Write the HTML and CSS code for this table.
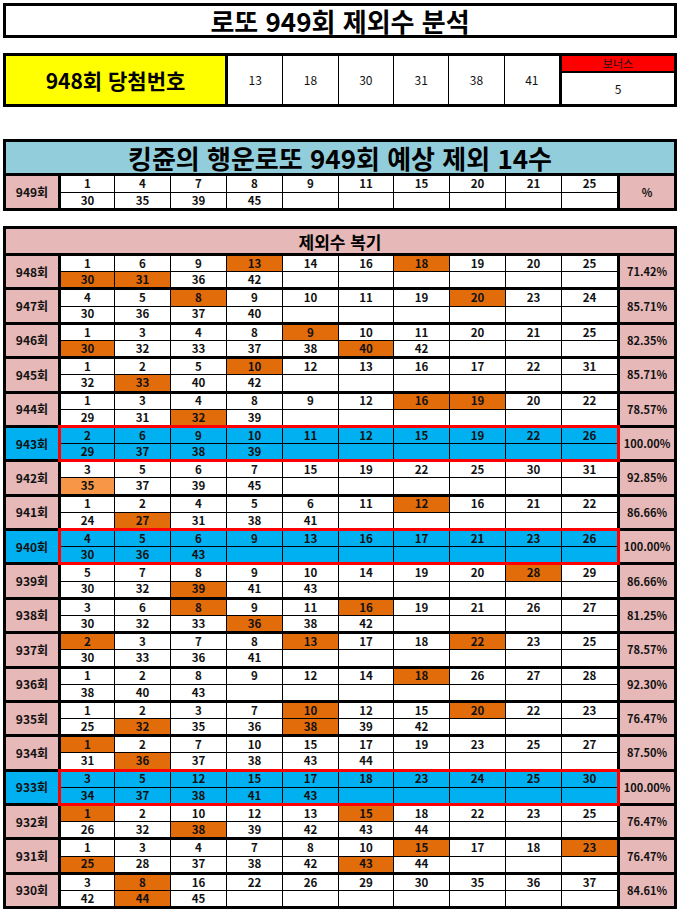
FILE: index.html
```html
<!DOCTYPE html>
<html lang="ko">
<head>
<meta charset="utf-8">
<title>로또 949회 제외수 분석</title>
<link rel="stylesheet" href="styles.css">
</head>
<body>
<div class="page">
  <div class="box title-box">로또 949회 제외수 분석</div>

  <div class="box win-box">
    <div class="win-label">948회 당첨번호</div>
    <div class="win-nums"><span>13</span><span>18</span><span>30</span><span>31</span><span>38</span><span>41</span></div>
    <div class="bonus"><div class="bonus-head">보너스</div><div class="bonus-val">5</div></div>
  </div>

  <div class="box pred-box">
    <div class="pred-title">킹쥰의 행운로또 949회 예상 제외 14수</div>
    <div class="group">
      <div class="label">949회</div>
      <div class="nums tall">
        <span>1</span><span>4</span><span>7</span><span>8</span><span>9</span><span>11</span><span>15</span><span>20</span><span>21</span><span>25</span>
        <span>30</span><span>35</span><span>39</span><span>45</span><span></span><span></span><span></span><span></span><span></span><span></span>
      </div>
      <div class="pct">%</div>
    </div>
  </div>

  <div class="box review-box">
    <div class="review-title">제외수 복기</div>

    <div class="group">
      <div class="label">948회</div>
      <div class="nums">
        <span>1</span><span>6</span><span>9</span><span class="o">13</span><span>14</span><span>16</span><span class="o">18</span><span>19</span><span>20</span><span>25</span>
        <span class="o">30</span><span class="o">31</span><span>36</span><span>42</span><span></span><span></span><span></span><span></span><span></span><span></span>
      </div>
      <div class="pct">71.42%</div>
    </div>

    <div class="group">
      <div class="label">947회</div>
      <div class="nums">
        <span>4</span><span>5</span><span class="o">8</span><span>9</span><span>10</span><span>11</span><span>19</span><span class="o">20</span><span>23</span><span>24</span>
        <span>30</span><span>36</span><span>37</span><span>40</span><span></span><span></span><span></span><span></span><span></span><span></span>
      </div>
      <div class="pct">85.71%</div>
    </div>

    <div class="group">
      <div class="label">946회</div>
      <div class="nums">
        <span>1</span><span>3</span><span>4</span><span>8</span><span class="o">9</span><span>10</span><span>11</span><span>20</span><span>21</span><span>25</span>
        <span class="o">30</span><span>32</span><span>33</span><span>37</span><span>38</span><span class="o">40</span><span>42</span><span></span><span></span><span></span>
      </div>
      <div class="pct">82.35%</div>
    </div>

    <div class="group">
      <div class="label">945회</div>
      <div class="nums">
        <span>1</span><span>2</span><span>5</span><span class="o">10</span><span>12</span><span>13</span><span>16</span><span>17</span><span>22</span><span>31</span>
        <span>32</span><span class="o">33</span><span>40</span><span>42</span><span></span><span></span><span></span><span></span><span></span><span></span>
      </div>
      <div class="pct">85.71%</div>
    </div>

    <div class="group">
      <div class="label">944회</div>
      <div class="nums">
        <span>1</span><span>3</span><span>4</span><span>8</span><span>9</span><span>12</span><span class="o">16</span><span class="o">19</span><span>20</span><span>22</span>
        <span>29</span><span>31</span><span class="o">32</span><span>39</span><span></span><span></span><span></span><span></span><span></span><span></span>
      </div>
      <div class="pct">78.57%</div>
    </div>

    <div class="group hit">
      <div class="label">943회</div>
      <div class="nums">
        <span>2</span><span>6</span><span>9</span><span>10</span><span>11</span><span>12</span><span>15</span><span>19</span><span>22</span><span>26</span>
        <span>29</span><span>37</span><span>38</span><span>39</span><span></span><span></span><span></span><span></span><span></span><span></span>
      </div>
      <div class="pct">100.00%</div>
    </div>

    <div class="group">
      <div class="label">942회</div>
      <div class="nums">
        <span>3</span><span>5</span><span>6</span><span>7</span><span>15</span><span>19</span><span>22</span><span>25</span><span>30</span><span>31</span>
        <span class="l">35</span><span>37</span><span>39</span><span>45</span><span></span><span></span><span></span><span></span><span></span><span></span>
      </div>
      <div class="pct">92.85%</div>
    </div>

    <div class="group">
      <div class="label">941회</div>
      <div class="nums">
        <span>1</span><span>2</span><span>4</span><span>5</span><span>6</span><span>11</span><span class="o">12</span><span>16</span><span>21</span><span>22</span>
        <span>24</span><span class="o">27</span><span>31</span><span>38</span><span>41</span><span></span><span></span><span></span><span></span><span></span>
      </div>
      <div class="pct">86.66%</div>
    </div>

    <div class="group hit">
      <div class="label">940회</div>
      <div class="nums">
        <span>4</span><span>5</span><span>6</span><span>9</span><span>13</span><span>16</span><span>17</span><span>21</span><span>23</span><span>26</span>
        <span>30</span><span>36</span><span>43</span><span></span><span></span><span></span><span></span><span></span><span></span><span></span>
      </div>
      <div class="pct">100.00%</div>
    </div>

    <div class="group">
      <div class="label">939회</div>
      <div class="nums">
        <span>5</span><span>7</span><span>8</span><span>9</span><span>10</span><span>14</span><span>19</span><span>20</span><span class="o">28</span><span>29</span>
        <span>30</span><span>32</span><span class="o">39</span><span>41</span><span>43</span><span></span><span></span><span></span><span></span><span></span>
      </div>
      <div class="pct">86.66%</div>
    </div>

    <div class="group">
      <div class="label">938회</div>
      <div class="nums">
        <span>3</span><span>6</span><span class="o">8</span><span>9</span><span>11</span><span class="o">16</span><span>19</span><span>21</span><span>26</span><span>27</span>
        <span>30</span><span>32</span><span>33</span><span class="o">36</span><span>38</span><span>42</span><span></span><span></span><span></span><span></span>
      </div>
      <div class="pct">81.25%</div>
    </div>

    <div class="group">
      <div class="label">937회</div>
      <div class="nums">
        <span class="o">2</span><span>3</span><span>7</span><span>8</span><span class="o">13</span><span>17</span><span>18</span><span class="o">22</span><span>23</span><span>25</span>
        <span>30</span><span>33</span><span>36</span><span>41</span><span></span><span></span><span></span><span></span><span></span><span></span>
      </div>
      <div class="pct">78.57%</div>
    </div>

    <div class="group">
      <div class="label">936회</div>
      <div class="nums">
        <span>1</span><span>2</span><span>8</span><span>9</span><span>12</span><span>14</span><span class="o">18</span><span>26</span><span>27</span><span>28</span>
        <span>38</span><span>40</span><span>43</span><span></span><span></span><span></span><span></span><span></span><span></span><span></span>
      </div>
      <div class="pct">92.30%</div>
    </div>

    <div class="group">
      <div class="label">935회</div>
      <div class="nums">
        <span>1</span><span>2</span><span>3</span><span>7</span><span class="o">10</span><span>12</span><span>15</span><span class="o">20</span><span>22</span><span>23</span>
        <span>25</span><span class="o">32</span><span>35</span><span>36</span><span class="o">38</span><span>39</span><span>42</span><span></span><span></span><span></span>
      </div>
      <div class="pct">76.47%</div>
    </div>

    <div class="group">
      <div class="label">934회</div>
      <div class="nums">
        <span class="o">1</span><span>2</span><span>7</span><span>10</span><span>15</span><span>17</span><span>19</span><span>23</span><span>25</span><span>27</span>
        <span>31</span><span class="o">36</span><span>37</span><span>38</span><span>43</span><span>44</span><span></span><span></span><span></span><span></span>
      </div>
      <div class="pct">87.50%</div>
    </div>

    <div class="group hit">
      <div class="label">933회</div>
      <div class="nums">
        <span>3</span><span>5</span><span>12</span><span>15</span><span>17</span><span>18</span><span>23</span><span>24</span><span>25</span><span>30</span>
        <span>34</span><span>37</span><span>38</span><span>41</span><span>43</span><span></span><span></span><span></span><span></span><span></span>
      </div>
      <div class="pct">100.00%</div>
    </div>

    <div class="group">
      <div class="label">932회</div>
      <div class="nums">
        <span class="o">1</span><span>2</span><span>10</span><span>12</span><span>13</span><span class="o">15</span><span>18</span><span>22</span><span>23</span><span>25</span>
        <span>26</span><span>32</span><span class="o">38</span><span>39</span><span>42</span><span>43</span><span>44</span><span></span><span></span><span></span>
      </div>
      <div class="pct">76.47%</div>
    </div>

    <div class="group">
      <div class="label">931회</div>
      <div class="nums">
        <span>1</span><span>3</span><span>4</span><span>7</span><span>8</span><span>10</span><span class="o">15</span><span>17</span><span>18</span><span class="o">23</span>
        <span class="o">25</span><span>28</span><span>37</span><span>38</span><span>42</span><span class="o">43</span><span>44</span><span></span><span></span><span></span>
      </div>
      <div class="pct">76.47%</div>
    </div>

    <div class="group">
      <div class="label">930회</div>
      <div class="nums">
        <span>3</span><span class="o">8</span><span>16</span><span>22</span><span>26</span><span>29</span><span>30</span><span>35</span><span>36</span><span>37</span>
        <span>42</span><span class="o">44</span><span>45</span><span></span><span></span><span></span><span></span><span></span><span></span><span></span>
      </div>
      <div class="pct">84.61%</div>
    </div>
  </div>
</div>
</body>
</html>
```

FILE: styles.css
```css
* { box-sizing: border-box; }

body {
  margin: 0;
  background: #ffffff;
  font-family: "Noto Sans CJK KR", "Noto Sans", sans-serif;
  color: #111111;
}

.page {
  width: 680px;
  padding: 3px 0 0 3px;
}

.box {
  width: 674px;
  border: 3px solid #000000;
}

/* top title */
.title-box {
  height: 35px;
  display: flex;
  align-items: center;
  justify-content: center;
  font-size: 26px;
  font-weight: 700;
  line-height: 1;
  color: #000;
}

/* winning numbers */
.win-box {
  margin-top: 15px;
  height: 54px;
  display: flex;
}

.win-label {
  width: 222px;
  background: #ffff00;
  border-right: 3px solid #000;
  display: flex;
  align-items: center;
  justify-content: center;
  font-size: 21px;
  font-weight: 700;
  line-height: 1;
  color: #000;
}

.win-nums {
  flex: 1;
  display: grid;
  grid-template-columns: repeat(6, 1fr);
  column-gap: 1px;
  background: #000;
}

.win-nums span {
  background: #fff;
  display: flex;
  align-items: center;
  justify-content: center;
  font-size: 12px;
  line-height: 1;
}

.bonus {
  width: 115px;
  border-left: 3px solid #000;
  display: flex;
  flex-direction: column;
}

.bonus-head {
  height: 17px;
  background: #ff0000;
  border-bottom: 2px solid #000;
  display: flex;
  align-items: center;
  justify-content: center;
  font-size: 11px;
  line-height: 1;
}

.bonus-val {
  flex: 1;
  display: flex;
  align-items: center;
  justify-content: center;
  font-size: 12px;
  line-height: 1;
}

/* prediction */
.pred-box {
  margin-top: 32px;
}

.pred-title {
  height: 31px;
  background: #92cddc;
  display: flex;
  align-items: center;
  justify-content: center;
  font-size: 26px;
  font-weight: 700;
  line-height: 1;
  color: #000;
}

/* review */
.review-box {
  margin-top: 15px;
}

.review-title {
  height: 24px;
  background: #e6b8b7;
  display: flex;
  align-items: center;
  justify-content: center;
  font-size: 17px;
  font-weight: 700;
  line-height: 1;
  color: #000;
}

/* group rows */
.group {
  display: flex;
  border-top: 3px solid #000;
}

.label {
  width: 55px;
  background: #e6b8b7;
  border-right: 3px solid #000;
  display: flex;
  align-items: center;
  justify-content: center;
  font-size: 12px;
  font-weight: 700;
  line-height: 1;
}

.nums {
  position: relative;
  width: 556px;
  display: grid;
  grid-template-columns: 53px 55px 55px 55px 55px 54px 55px 55px 55px 55px;
  grid-template-rows: 15.2px 15.2px;
  gap: 1px;
  background: #000;
}

.nums.tall {
  grid-template-rows: 16px 15px;
}

.nums span {
  background: #fff;
  display: flex;
  align-items: center;
  justify-content: center;
  font-size: 11.5px;
  font-weight: 700;
  line-height: 1;
}

.nums span.o { background: #e26b0a; }
.nums span.l { background: #f79646; }

.pct {
  width: 57px;
  background: #e6b8b7;
  border-left: 3px solid #000;
  display: flex;
  align-items: center;
  justify-content: center;
  font-size: 11px;
  font-weight: 700;
  line-height: 1;
}

/* all-excluded rows */
.hit .label { background: #00b0f0; }
.hit .nums span { background: #00b0f0; }

.hit .nums::after {
  content: "";
  position: absolute;
  top: -3px;
  bottom: -3px;
  left: -3px;
  right: -3px;
  border: 3px solid #ff0000;
  z-index: 2;
  pointer-events: none;
}
```
